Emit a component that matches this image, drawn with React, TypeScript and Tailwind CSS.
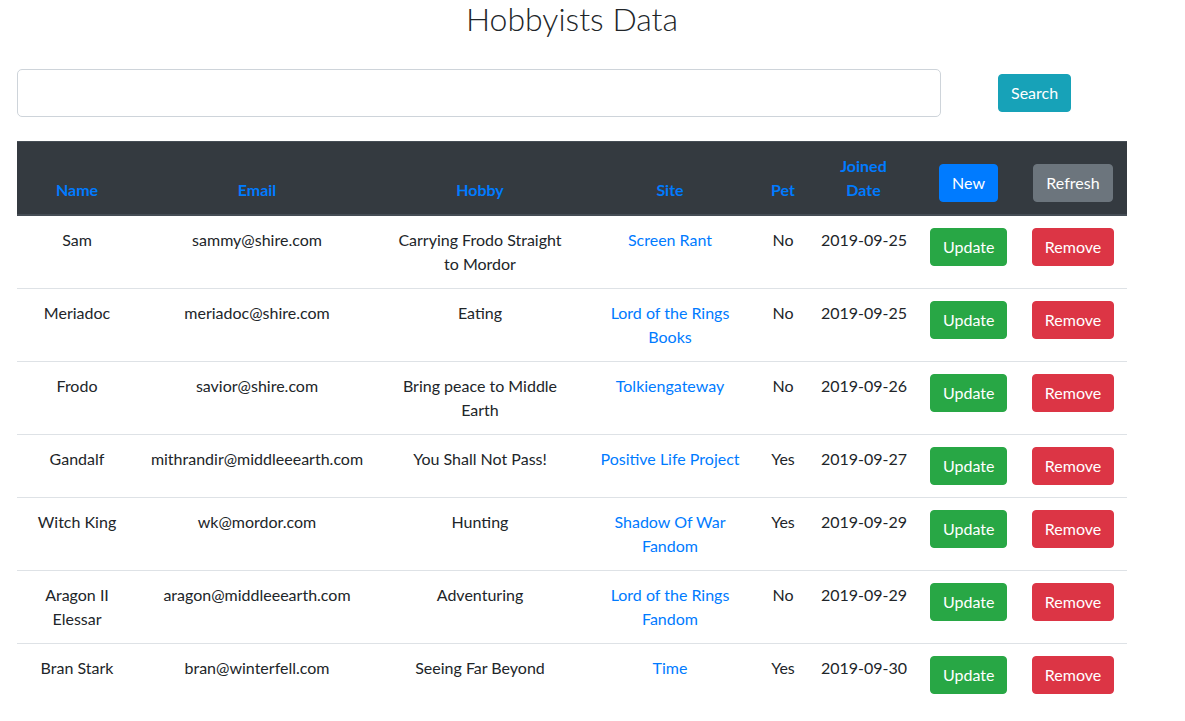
import React from 'react'

type Row = {
  name: string
  email: string
  hobby: string
  site: string
  pet: string
  joined: string
}

const rows: Row[] = [
  { name: 'Sam', email: 'sammy@shire.com', hobby: 'Carrying Frodo Straight to Mordor', site: 'Screen Rant', pet: 'No', joined: '2019-09-25' },
  { name: 'Meriadoc', email: 'meriadoc@shire.com', hobby: 'Eating', site: 'Lord of the Rings Books', pet: 'No', joined: '2019-09-25' },
  { name: 'Frodo', email: 'savior@shire.com', hobby: 'Bring peace to Middle Earth', site: 'Tolkiengateway', pet: 'No', joined: '2019-09-26' },
  { name: 'Gandalf', email: 'mithrandir@middleeearth.com', hobby: 'You Shall Not Pass!', site: 'Positive Life Project', pet: 'Yes', joined: '2019-09-27' },
  { name: 'Witch King', email: 'wk@mordor.com', hobby: 'Hunting', site: 'Shadow Of War Fandom', pet: 'Yes', joined: '2019-09-29' },
  { name: 'Aragon II Elessar', email: 'aragon@middleeearth.com', hobby: 'Adventuring', site: 'Lord of the Rings Fandom', pet: 'No', joined: '2019-09-29' },
  { name: 'Bran Stark', email: 'bran@winterfell.com', hobby: 'Seeing Far Beyond', site: 'Time', pet: 'Yes', joined: '2019-09-30' },
]

const btn = 'px-3 py-[6px] leading-6 rounded-[4px] border text-white text-[16px] font-normal'

export default function App() {
  return (
    <div className="w-[1110px] ml-[17px] font-['Lato',sans-serif] text-[#212529] bg-white">
      <h2 className="text-center text-[32px] leading-[38px] font-light">Hobbyists Data</h2>

      {/* search bar */}
      <div className="flex items-center mt-[31px]">
        <input
          type="text"
          className="w-[924px] h-[48px] border border-[#ced4da] rounded-[5px] px-4 outline-none"
        />
        <button className={`${btn} ml-[57px] bg-[#17a2b8] border-[#17a2b8]`}>Search</button>
      </div>

      <table className="mt-[24px] w-full table-fixed border-collapse text-center text-[16px] leading-6">
        <colgroup>
          <col className="w-[120px]" />
          <col className="w-[240px]" />
          <col className="w-[206px]" />
          <col className="w-[174px]" />
          <col className="w-[52px]" />
          <col className="w-[109px]" />
          <col className="w-[101px]" />
          <col className="w-[108px]" />
        </colgroup>
        <thead className="bg-[#343a40]">
          <tr>
            {['Name', 'Email', 'Hobby', 'Site', 'Pet'].map((h) => (
              <th
                key={h}
                className="p-3 align-bottom font-bold text-[#007bff] border-t border-b-2 border-[#454d55]"
              >
                {h}
              </th>
            ))}
            <th className="p-3 align-bottom font-bold text-[#007bff] border-t border-b-2 border-[#454d55]">
              Joined
              <br />
              Date
            </th>
            <th className="p-3 align-bottom border-t border-b-2 border-[#454d55]">
              <button className={`${btn} bg-[#007bff] border-[#007bff]`}>New</button>
            </th>
            <th className="p-3 align-bottom border-t border-b-2 border-[#454d55]">
              <button className={`${btn} bg-[#6c757d] border-[#6c757d]`}>Refresh</button>
            </th>
          </tr>
        </thead>
        <tbody>
          {rows.map((r) => (
            <tr key={r.name}>
              <td className="p-3 align-top border-t border-[#dee2e6]">{r.name}</td>
              <td className="p-3 align-top border-t border-[#dee2e6] whitespace-nowrap">{r.email}</td>
              <td className="p-3 align-top border-t border-[#dee2e6]">{r.hobby}</td>
              <td className="p-3 align-top border-t border-[#dee2e6]">
                <a className="text-[#007bff]">{r.site}</a>
              </td>
              <td className="p-3 align-top border-t border-[#dee2e6]">{r.pet}</td>
              <td className="p-3 align-top border-t border-[#dee2e6] whitespace-nowrap">{r.joined}</td>
              <td className="p-3 align-top border-t border-[#dee2e6]">
                <button className={`${btn} bg-[#28a745] border-[#28a745]`}>Update</button>
              </td>
              <td className="p-3 align-top border-t border-[#dee2e6]">
                <button className={`${btn} bg-[#dc3545] border-[#dc3545]`}>Remove</button>
              </td>
            </tr>
          ))}
        </tbody>
      </table>
    </div>
  )
}
